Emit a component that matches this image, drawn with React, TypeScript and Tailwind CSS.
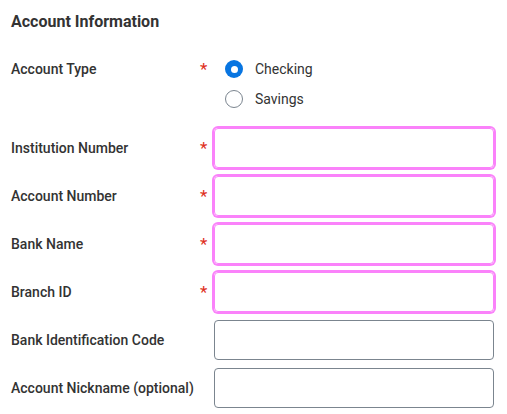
import { useState } from "react";

interface Field { label: string; required: boolean; }

const FIELDS: Field[] = [
  { label: "Institution Number", required: true },
  { label: "Account Number", required: true },
  { label: "Bank Name", required: true },
  { label: "Branch ID", required: true },
  { label: "Bank Identification Code", required: false },
  { label: "Account Nickname (optional)", required: false },
];

function Radio({ checked }: { checked: boolean }) {
  return checked ? (
    <span className="w-[18px] h-[18px] rounded-full bg-[#0875e1] flex items-center justify-center">
      <span className="w-[7px] h-[7px] rounded-full bg-white" />
    </span>
  ) : (
    <span className="w-[18px] h-[18px] rounded-full border border-[#7b858f] bg-white" />
  );
}

export default function App() {
  const [type, setType] = useState("Checking");
  const [values, setValues] = useState<Record<string, string>>({});

  return (
    <div className="w-[507px] h-[414px] bg-white pt-[12px] pl-[11px] text-[#333333] overflow-hidden"
      style={{ fontFamily: "Roboto, 'Liberation Sans', sans-serif" }}>
      <h2 className="text-[16px] leading-5 font-bold">Account Information</h2>

      {/* Account type */}
      <div className="flex mt-[22px]">
        <div className="w-[189px] h-[30px] flex items-center text-[14px] font-medium">Account Type</div>
        <div className="w-[14px] h-[30px] flex items-center text-[17px] text-[#de2e21] leading-none">*</div>
        <div className="flex flex-col">
          {["Checking", "Savings"].map(opt => (
            <label key={opt} onClick={() => setType(opt)}
              className="h-[30px] flex items-center gap-[12px] pl-[11px] text-[14px] cursor-pointer">
              <Radio checked={type === opt} />
              <span>{opt}</span>
            </label>
          ))}
        </div>
      </div>

      {/* Inputs */}
      <div className="mt-[10px] flex flex-col">
        {FIELDS.map(f => (
          <div key={f.label} className="flex items-center h-[48px]">
            <div className="w-[189px] text-[14px] font-medium">{f.label}</div>
            <div className="w-[14px] text-[17px] text-[#de2e21] leading-none">{f.required ? "*" : ""}</div>
            <input value={values[f.label] || ""}
              onChange={e => setValues(v => ({ ...v, [f.label]: e.target.value }))}
              className={`w-[280px] h-[40px] rounded-[4px] border px-2 text-sm outline-none ${
                f.required ? "border-[#fa82fa] ring-2 ring-[#fa82fa]" : "border-[#7b858f]"
              }`} />
          </div>
        ))}
      </div>
    </div>
  );
}
